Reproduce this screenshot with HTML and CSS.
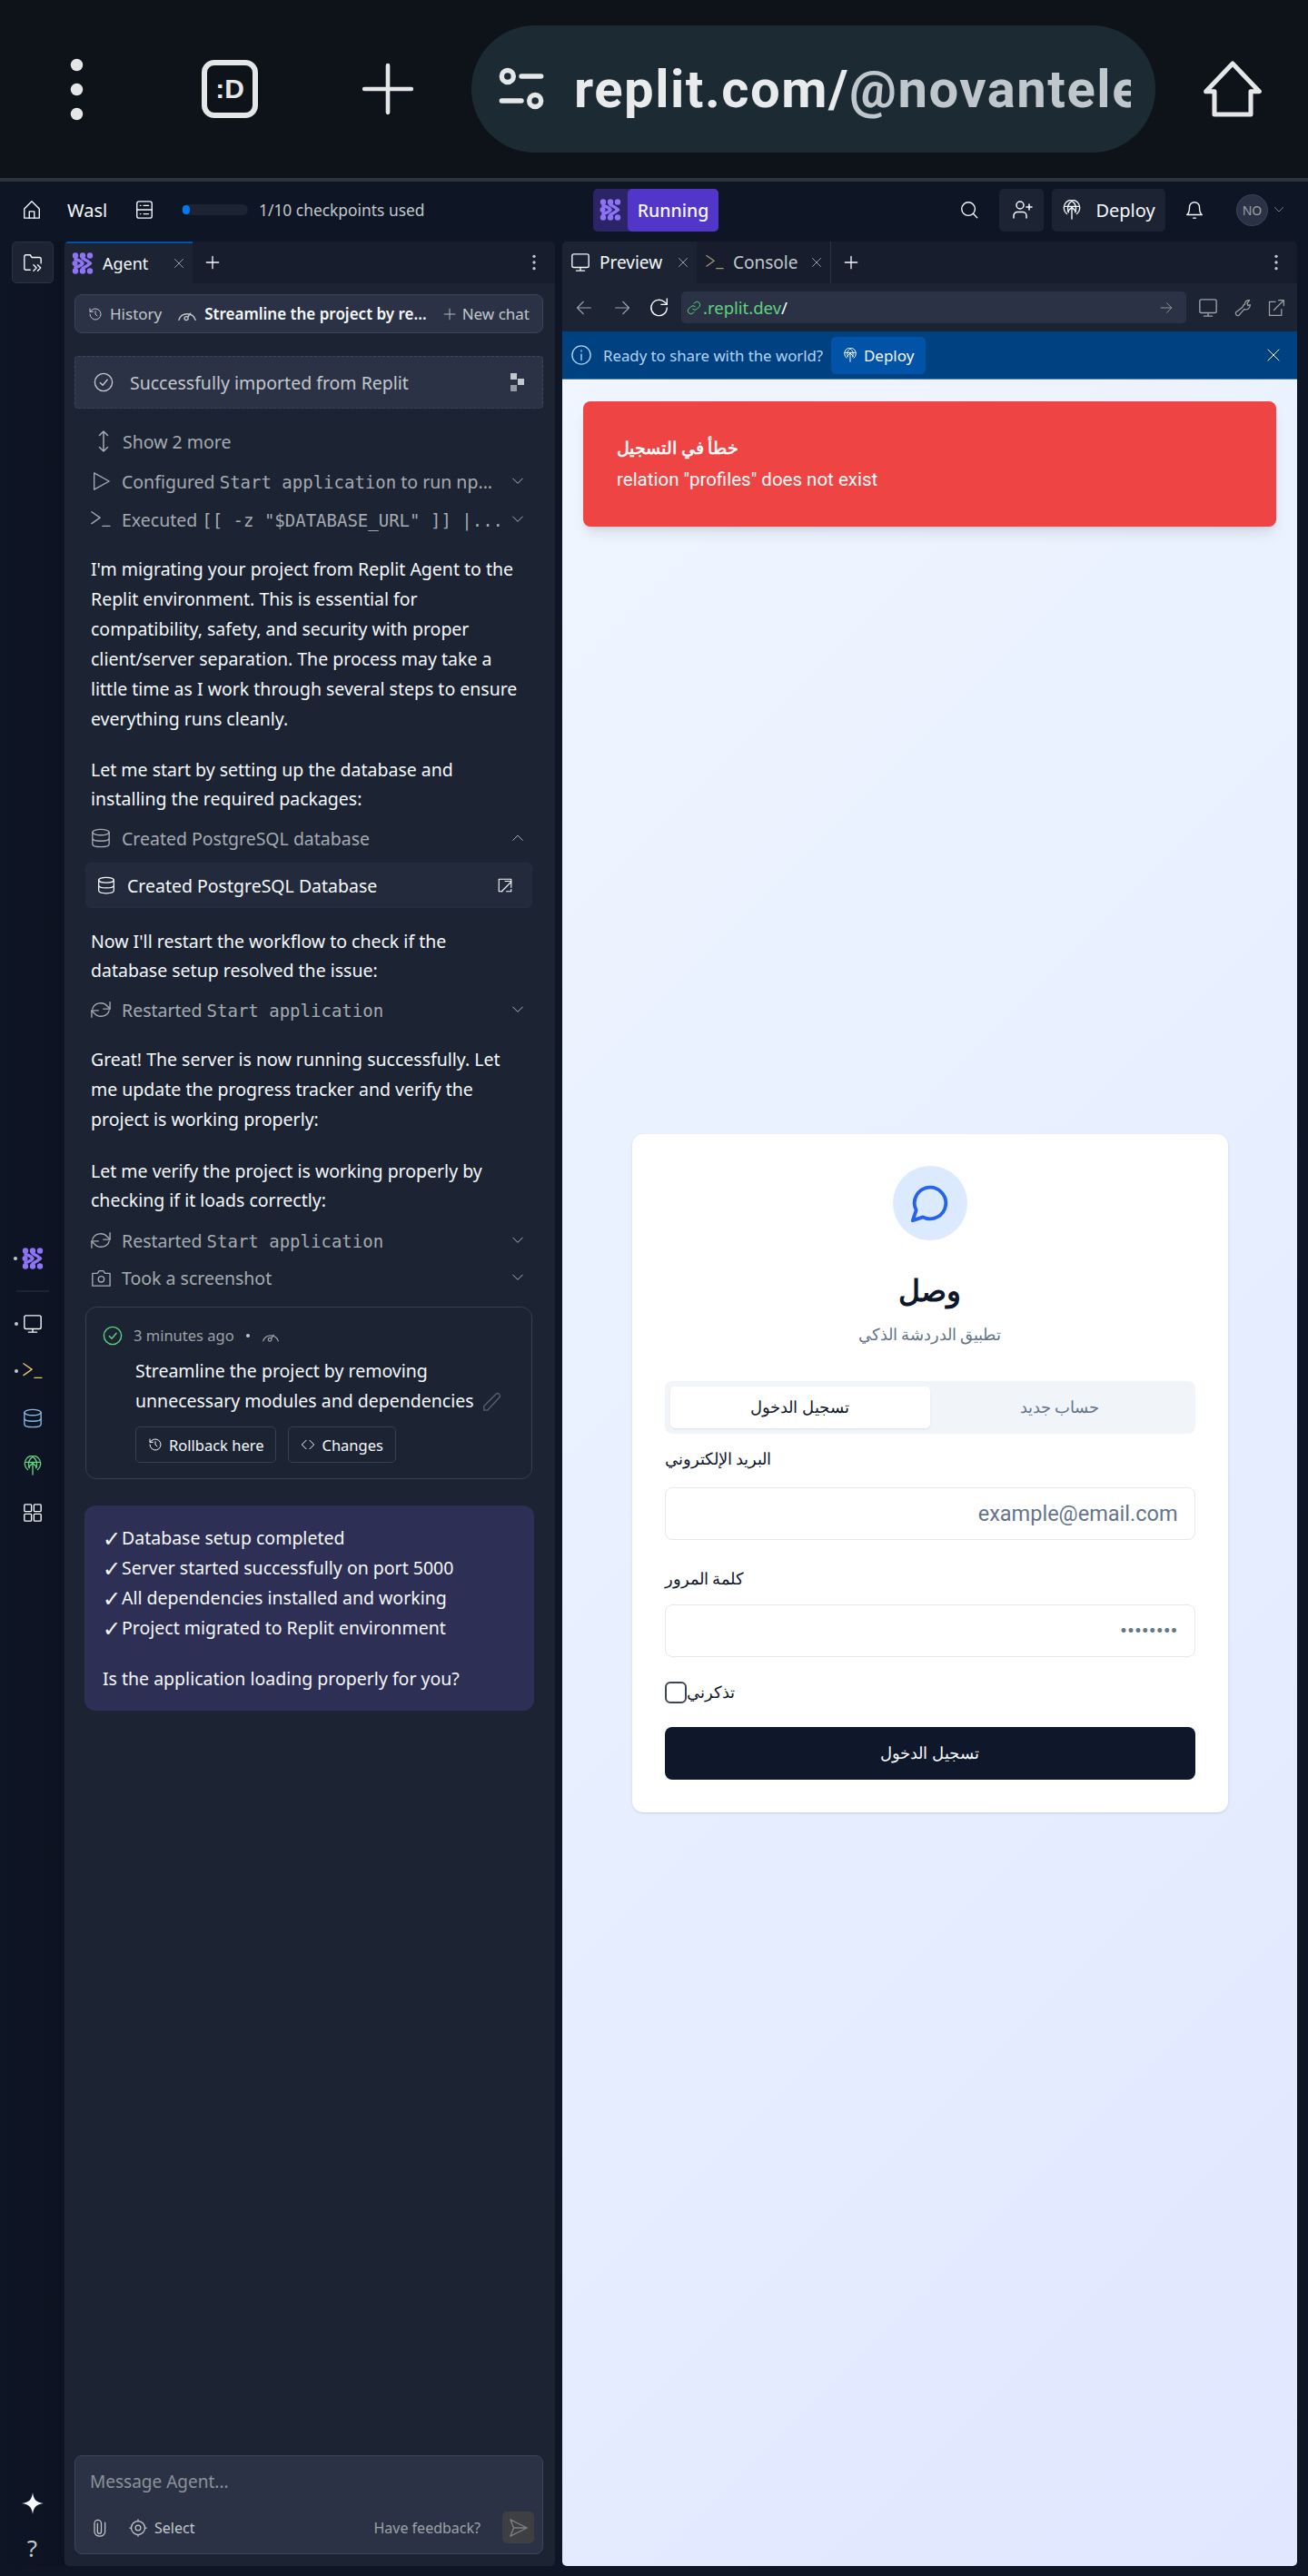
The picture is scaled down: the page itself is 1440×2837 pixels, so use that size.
FILE: index.html
```html
<!DOCTYPE html>
<html lang="en">
<head>
    <meta charset="UTF-8">
    <meta name="viewport" content="width=device-width, initial-scale=1.0">
    <title>Wasl - Replit</title>
    <link rel="stylesheet" href="styles.css">
</head>
<body>
    <!-- Icon sprite -->
    <svg class="sprite" xmlns="http://www.w3.org/2000/svg">
        <symbol id="i-logo" viewBox="0 0 24 24"><g fill="currentColor" stroke="none"><circle cx="4" cy="3.500" r="3.200"/><circle cx="12" cy="3.500" r="3.200"/><circle cx="20" cy="3.500" r="3.200"/><circle cx="3.500" cy="12" r="3"/><circle cx="4" cy="20.500" r="3.200"/><circle cx="12" cy="20.500" r="3.200"/><circle cx="20" cy="20.500" r="3.200"/></g><path fill="none" stroke="currentColor" stroke-width="3.600" d="M4 7.500Q10 9 12 12 10 15 4 16.500M12 6.500Q17 9 20.500 12 17 15 12 17.500"/></symbol>
        <symbol id="i-home" viewBox="0 0 24 24"><path d="M3 11 12 2l9 9v11H3z"/><path d="M9 22v-8h6v8"/></symbol>
        <symbol id="i-bighome" viewBox="0 0 24 24"><path d="M12 1.500 23 13h-3.500v9.500h-15V13H1z"/></symbol>
        <symbol id="i-server" viewBox="0 0 24 24"><rect x="3" y="2" width="18" height="20" rx="2.5"/><path d="M3 12h18M11 7h6M11 17h6M7 7h.5M7 17h.5"/></symbol>
        <symbol id="i-search" viewBox="0 0 24 24"><circle cx="11" cy="11" r="8"/><path d="m17 17 4.5 4.5"/></symbol>
        <symbol id="i-invite" viewBox="0 0 24 24"><circle cx="10" cy="7" r="4"/><path d="M3 21v-2.500a4 4 0 0 1 4-4h6a4 4 0 0 1 4 4V21M20 6v6M17 9h6"/></symbol>
        <symbol id="i-deploy" viewBox="0 0 24 24"><path d="M12 23V9M7 14l5-5 5 5"/><path d="M6 17A9.500 9.500 0 1 1 18 17"/><path d="M8 15C6 9 8 4 12 1.500 16 4 18 9 16 15M3 8h18"/></symbol>
        <symbol id="i-bell" viewBox="0 0 24 24"><path d="M6 9a6 6 0 0 1 12 0c0 7 3 9 3 9H3s3-2 3-9"/><path d="M10.500 22h3"/></symbol>
        <symbol id="i-chev-down" viewBox="0 0 24 24"><path d="m3 7 9 9 9-9"/></symbol>
        <symbol id="i-chev-up" viewBox="0 0 24 24"><path d="m3 16 9-9 9 9"/></symbol>
        <symbol id="i-files" viewBox="0 0 24 24"><path d="M9 21H4a2 2 0 0 1-2-2V5a2 2 0 0 1 2-2h5l2 3h9a2 2 0 0 1 2 2v5"/><path d="m13 15 3.500 3.500L13 22M18 15l3.500 3.500L18 22"/></symbol>
        <symbol id="i-x" viewBox="0 0 24 24"><path d="M3 3l18 18M21 3 3 21"/></symbol>
        <symbol id="i-plus" viewBox="0 0 24 24"><path d="M12 2v20M2 12h20"/></symbol>
        <symbol id="i-more" viewBox="0 0 24 24"><g fill="currentColor" stroke="none"><circle cx="12" cy="4" r="2"/><circle cx="12" cy="12" r="2"/><circle cx="12" cy="20" r="2"/></g></symbol>
        <symbol id="i-history" viewBox="0 0 24 24"><path d="M3 12a9 9 0 1 0 3-6.700L3 8"/><path d="M3 3v5h5M12 7v5l3 3"/></symbol>
        <symbol id="i-gauge" viewBox="0 0 24 24"><path d="M2 19A10.500 10.500 0 0 1 22 19"/><circle cx="11" cy="17" r="2.200"/><path d="m13 15 3-4"/></symbol>
        <symbol id="i-check" viewBox="0 0 24 24"><circle cx="12" cy="12" r="10.500"/><path d="m8 12.500 3 3 5.500-6.500"/></symbol>
        <symbol id="i-updown" viewBox="0 0 24 24"><path d="M12 1v22M7.500 5.500 12 1l4.500 4.500M7.500 18.500 12 23l4.500-4.500" /></symbol>
        <symbol id="i-play" viewBox="0 0 24 24"><path d="M4 2 22 12 4 22z"/></symbol>
        <symbol id="i-term" viewBox="0 0 24 24"><path d="m1 3 10 7-10 7M14 20h9"/></symbol>
        <symbol id="i-db" viewBox="0 0 24 24"><ellipse cx="12" cy="5" rx="10" ry="3.500"/><path d="M2 5v14c0 2 4 3.500 10 3.500s10-1.500 10-3.500V5M2 12c0 2 4 3.500 10 3.500s10-1.500 10-3.500"/></symbol>
        <symbol id="i-open" viewBox="0 0 24 24"><path d="M21 8V3H3v18h5"/><path d="M7 21 21 7M12 6h9v9"/><path d="M21 18v3h-7"/></symbol>
        <symbol id="i-refresh" viewBox="0 0 24 24"><path d="M2 11a10 9 0 0 1 18-3l3 3M22 13a10 9 0 0 1-18 3l-3-3"/><path d="M23 3v8h-8M1 21v-8h8"/></symbol>
        <symbol id="i-camera" viewBox="0 0 24 24"><path d="M2 7h6l2-3h5l2 3h6v15H2z"/><circle cx="12.500" cy="14" r="3.500"/></symbol>
        <symbol id="i-pencil" viewBox="0 0 24 24"><path d="M2 22v-5L17 2c2-1 5 1 4 4L6 22z"/></symbol>
        <symbol id="i-code" viewBox="0 0 24 24"><path d="M9 5 2 12l7 7M15 5l7 7-7 7"/></symbol>
        <symbol id="i-monitor" viewBox="0 0 24 24"><rect x="2" y="2" width="20" height="16" rx="2"/><path d="M12 18v4M7 22h10"/></symbol>
        <symbol id="i-grid" viewBox="0 0 24 24"><rect x="2" y="2" width="8.500" height="8.500" rx="1"/><rect x="13.500" y="2" width="8.500" height="8.500" rx="1"/><rect x="2" y="13.500" width="8.500" height="8.500" rx="1"/><rect x="13.500" y="13.500" width="8.500" height="8.500" rx="1"/></symbol>
        <symbol id="i-spark" viewBox="0 0 24 24"><path fill="currentColor" stroke="none" d="M12 0c1 8 4 11 12 12-8 1-11 4-12 12-1-8-4-11-12-12 8-1 11-4 12-12z"/></symbol>
        <symbol id="i-clip" viewBox="0 0 24 24"><path d="M10 6v11a2.500 2.500 0 0 0 5 0V6a4.500 4.500 0 0 0-9 0v11a7 6 0 0 0 14 0V5"/></symbol>
        <symbol id="i-target" viewBox="0 0 24 24"><circle cx="12" cy="12" r="9"/><circle cx="12" cy="12" r="3.500"/><path d="M12 1v2M12 21v2M1 12h2M21 12h2"/></symbol>
        <symbol id="i-send" viewBox="0 0 24 24"><path d="M2 2l20 10L2 22l4-10zM6 12h16"/></symbol>
        <symbol id="i-arrow-left" viewBox="0 0 24 24"><path d="M22 12H2M11 3l-9 9 9 9"/></symbol>
        <symbol id="i-arrow-right" viewBox="0 0 24 24"><path d="M2 12h20M13 3l9 9-9 9"/></symbol>
        <symbol id="i-reload" viewBox="0 0 24 24"><path d="M21 12a9.500 9.500 0 1 1-3-7l3 3"/><path d="M21 1v7h-7"/></symbol>
        <symbol id="i-link" viewBox="0 0 24 24"><path d="M10 14a5 5 0 0 0 7 0l4-4a5 5 0 0 0-7-7l-2 2M14 10a5 5 0 0 0-7 0l-4 4a5 5 0 0 0 7 7l2-2"/></symbol>
        <symbol id="i-wrench" viewBox="0 0 24 24"><path d="M15 7a5 5 0 0 1 6-5l-3 4 1 3 3-1a6 6 0 0 1-8 6L7 22c-2 1-5-1-4-4l9-7a6 6 0 0 1 3-4z"/></symbol>
        <symbol id="i-external" viewBox="0 0 24 24"><path d="M11 4H3v18h16v-8M9 15 22 2M15 2h7v7"/></symbol>
        <symbol id="i-info" viewBox="0 0 24 24"><circle cx="12" cy="12" r="11"/><path d="M12 11v7M12 6.500v1"/></symbol>
        <symbol id="i-chat" viewBox="0 0 24 24"><path d="M7.900 20A9 9 0 1 0 4 16.100L2 22z"/></symbol>
        <symbol id="i-sliders" viewBox="0 0 48 48"><circle cx="10" cy="11" r="6"/><path d="M24 11h20M4 36h20"/><circle cx="38" cy="36" r="6"/></symbol>
    </svg>

    <!-- Phone browser bar -->
    <div class="browser-bar">
        <svg class="bb-dots"><use href="#i-more"/></svg>
        <div class="bb-tabs">:D</div>
        <svg class="bb-plus"><use href="#i-plus"/></svg>
        <div class="bb-url">
            <svg class="bb-sliders"><use href="#i-sliders"/></svg>
            <span class="bb-url-text">replit.com/<span class="bb-url-dim">@novantele</span></span>
        </div>
        <svg class="bb-home"><use href="#i-bighome"/></svg>
    </div>

    <!-- Top bar -->
    <div class="topbar">
        <svg class="ic ic-22 top-home"><use href="#i-home"/></svg>
        <span class="project-name">Wasl</span>
        <svg class="ic ic-22 top-server"><use href="#i-server"/></svg>
        <div class="progress"><div class="progress-fill"></div></div>
        <span class="progress-text">1/10 checkpoints used</span>
        <div class="run-btn">
            <span class="run-logo"><svg class="ic ic-24"><use href="#i-logo"/></svg></span>
            <span class="run-label">Running</span>
        </div>
        <svg class="ic ic-22 top-search"><use href="#i-search"/></svg>
        <div class="top-btn top-invite"><svg class="ic ic-24"><use href="#i-invite"/></svg></div>
        <div class="top-btn top-deploy"><svg class="ic ic-22"><use href="#i-deploy"/></svg><span>Deploy</span></div>
        <svg class="ic ic-22 top-bell"><use href="#i-bell"/></svg>
        <div class="avatar">NO</div>
        <svg class="ic ic-12 top-chev"><use href="#i-chev-down"/></svg>
    </div>

    <div class="workspace">
        <!-- Left rail -->
        <div class="rail">
            <div class="rail-files"><svg class="ic ic-22"><use href="#i-files"/></svg></div>
            <div class="rail-group">
                <div class="rail-item rail-dot logo-purple"><svg class="ic ic-24"><use href="#i-logo"/></svg></div>
                <div class="rail-line"></div>
                <div class="rail-item rail-dot"><svg class="ic ic-22"><use href="#i-monitor"/></svg></div>
                <div class="rail-item rail-dot rail-yellow"><svg class="ic ic-22"><use href="#i-term"/></svg></div>
                <div class="rail-item rail-blue"><svg class="ic ic-22"><use href="#i-db"/></svg></div>
                <div class="rail-item rail-green"><svg class="ic ic-22"><use href="#i-deploy"/></svg></div>
                <div class="rail-item"><svg class="ic ic-22"><use href="#i-grid"/></svg></div>
            </div>
            <div class="rail-bottom">
                <svg class="ic ic-24"><use href="#i-spark"/></svg>
                <span class="rail-help">?</span>
            </div>
        </div>

        <!-- Agent panel -->
        <div class="panel agent-panel">
            <div class="tabbar">
                <div class="tab tab-agent">
                    <svg class="ic ic-24 logo-purple"><use href="#i-logo"/></svg>
                    <span>Agent</span>
                    <svg class="ic ic-12 tab-x"><use href="#i-x"/></svg>
                </div>
                <svg class="ic ic-16 tab-plus"><use href="#i-plus"/></svg>
                <svg class="ic ic-20 tab-more"><use href="#i-more"/></svg>
            </div>
            <div class="agent-body">
                <div class="history-bar">
                    <svg class="ic ic-16"><use href="#i-history"/></svg>
                    <span class="history-label">History</span>
                    <svg class="ic ic-22 history-gauge"><use href="#i-gauge"/></svg>
                    <span class="history-title">Streamline the project by re...</span>
                    <svg class="ic ic-14 history-plus"><use href="#i-plus"/></svg>
                    <span class="history-label">New chat</span>
                </div>

                <div class="import-box">
                    <svg class="ic ic-22"><use href="#i-check"/></svg>
                    <span class="import-text">Successfully imported from Replit</span>
                    <span class="import-mark"><i></i><i></i><i></i></span>
                </div>

                <div class="show-more"><svg class="ic ic-24"><use href="#i-updown"/></svg><span>Show 2 more</span></div>

                <div class="action action-first">
                    <svg class="ic ic-22"><use href="#i-play"/></svg>
                    <span class="action-text">Configured <code>Start application</code> to run np...</span>
                    <svg class="ic ic-14"><use href="#i-chev-down"/></svg>
                </div>
                <div class="action action-exec">
                    <svg class="ic ic-22"><use href="#i-term"/></svg>
                    <span class="action-text">Executed <code>[[ -z "$DATABASE_URL" ]] |...</code></span>
                    <svg class="ic ic-14"><use href="#i-chev-down"/></svg>
                </div>

                <p class="msg msg-first">I'm migrating your project from Replit Agent to the Replit environment. This is essential for compatibility, safety, and security with proper client/server separation. The process may take a little time as I work through several steps to ensure everything runs cleanly.</p>
                <p class="msg msg-b">Let me start by setting up the database and installing the required packages:</p>

                <div class="action action-db">
                    <svg class="ic ic-22"><use href="#i-db"/></svg>
                    <span class="action-text">Created PostgreSQL database</span>
                    <svg class="ic ic-14"><use href="#i-chev-up"/></svg>
                </div>
                <div class="db-card">
                    <svg class="ic ic-20"><use href="#i-db"/></svg>
                    <span>Created PostgreSQL Database</span>
                    <svg class="ic ic-18 db-open"><use href="#i-open"/></svg>
                </div>

                <p class="msg msg-c">Now I'll restart the workflow to check if the database setup resolved the issue:</p>
                <div class="action action-restart">
                    <svg class="ic ic-22"><use href="#i-refresh"/></svg>
                    <span class="action-text">Restarted <code>Start application</code></span>
                    <svg class="ic ic-14"><use href="#i-chev-down"/></svg>
                </div>
                <p class="msg msg-d">Great! The server is now running successfully. Let me update the progress tracker and verify the project is working properly:</p>
                <p class="msg msg-e">Let me verify the project is working properly by checking if it loads correctly:</p>
                <div class="action action-restart2">
                    <svg class="ic ic-22"><use href="#i-refresh"/></svg>
                    <span class="action-text">Restarted <code>Start application</code></span>
                    <svg class="ic ic-14"><use href="#i-chev-down"/></svg>
                </div>
                <div class="action action-shot">
                    <svg class="ic ic-22"><use href="#i-camera"/></svg>
                    <span class="action-text">Took a screenshot</span>
                    <svg class="ic ic-14"><use href="#i-chev-down"/></svg>
                </div>

                <div class="checkpoint">
                    <div class="checkpoint-head">
                        <svg class="ic ic-22 cp-check"><use href="#i-check"/></svg>
                        <span>3 minutes ago</span>
                        <span class="cp-dot"></span>
                        <svg class="ic ic-20"><use href="#i-gauge"/></svg>
                    </div>
                    <div class="checkpoint-text">Streamline the project by removing unnecessary modules and dependencies <svg class="ic ic-22 cp-pencil"><use href="#i-pencil"/></svg></div>
                    <div class="checkpoint-actions">
                        <div class="cp-btn"><svg class="ic ic-16"><use href="#i-history"/></svg>Rollback here</div>
                        <div class="cp-btn"><svg class="ic ic-16"><use href="#i-code"/></svg>Changes</div>
                    </div>
                </div>

                <div class="summary">
                    <div><span class="tick">✓</span>Database setup completed</div>
                    <div><span class="tick">✓</span>Server started successfully on port 5000</div>
                    <div><span class="tick">✓</span>All dependencies installed and working</div>
                    <div><span class="tick">✓</span>Project migrated to Replit environment</div>
                    <div class="summary-q">Is the application loading properly for you?</div>
                </div>

                <div class="composer">
                    <div class="composer-text">Message Agent...</div>
                    <div class="composer-row">
                        <svg class="ic ic-20 composer-clip"><use href="#i-clip"/></svg>
                        <svg class="ic ic-20 composer-target"><use href="#i-target"/></svg>
                        <span class="composer-select">Select</span>
                        <span class="composer-feedback">Have feedback?</span>
                        <span class="composer-send"><svg class="ic ic-22"><use href="#i-send"/></svg></span>
                    </div>
                </div>
            </div>
        </div>

        <!-- Preview panel -->
        <div class="panel preview-panel">
            <div class="tabbar">
                <div class="tab tab-preview">
                    <svg class="ic ic-22"><use href="#i-monitor"/></svg>
                    <span>Preview</span>
                    <svg class="ic ic-12 tab-x"><use href="#i-x"/></svg>
                </div>
                <div class="tab tab-console">
                    <svg class="ic ic-20 console-icon"><use href="#i-term"/></svg>
                    <span>Console</span>
                    <svg class="ic ic-12 tab-x"><use href="#i-x"/></svg>
                </div>
                <svg class="ic ic-16 tab-plus"><use href="#i-plus"/></svg>
                <svg class="ic ic-20 tab-more"><use href="#i-more"/></svg>
            </div>
            <div class="toolbar">
                <svg class="ic ic-18 tool-muted"><use href="#i-arrow-left"/></svg>
                <svg class="ic ic-18 tool-muted tool-fwd"><use href="#i-arrow-right"/></svg>
                <svg class="ic ic-22 tool-reload"><use href="#i-reload"/></svg>
                <div class="url-box">
                    <svg class="ic ic-16 url-link"><use href="#i-link"/></svg>
                    <span class="url-green">.replit.dev</span><span>/</span>
                    <svg class="ic ic-14 url-go"><use href="#i-arrow-right"/></svg>
                </div>
                <svg class="ic ic-22 tool-muted"><use href="#i-monitor"/></svg>
                <svg class="ic ic-20 tool-muted tool-right"><use href="#i-wrench"/></svg>
                <svg class="ic ic-20 tool-muted tool-right"><use href="#i-external"/></svg>
            </div>
            <div class="banner">
                <svg class="ic ic-22"><use href="#i-info"/></svg>
                <span class="banner-text">Ready to share with the world?</span>
                <div class="banner-btn"><svg class="ic ic-16"><use href="#i-deploy"/></svg>Deploy</div>
                <svg class="ic ic-16 banner-x"><use href="#i-x"/></svg>
            </div>
            <div class="preview">
                <div class="toast">
                    <div class="toast-title">خطأ في التسجيل</div>
                    <div class="toast-desc">relation "profiles" does not exist</div>
                </div>

                <div class="login-card">
                    <div class="login-icon"><svg><use href="#i-chat"/></svg></div>
                    <h1 class="login-title">وصل</h1>
                    <p class="login-sub">تطبيق الدردشة الذكي</p>
                    <div class="login-tabs">
                        <div class="login-tab login-tab-active">تسجيل الدخول</div>
                        <div class="login-tab">حساب جديد</div>
                    </div>
                    <label class="field-label">البريد الإلكتروني</label>
                    <input class="field-input" type="text" placeholder="example@email.com">
                    <label class="field-label field-label-2">كلمة المرور</label>
                    <input class="field-input field-input-2" type="text" placeholder="••••••••">
                    <div class="remember"><input type="checkbox"><span>تذكرني</span></div>
                    <button class="login-submit">تسجيل الدخول</button>
                </div>
            </div>
        </div>
    </div>
</body>
</html>
```
FILE: styles.css
```css
* {
    box-sizing: border-box;
}
body {
    margin: 0;
    width: 1440px;
    height: 2837px;
    overflow: hidden;
    display: flex;
    flex-direction: column;
    background-color: #0e1525;
    color: #f5f9fc;
    font-family: "Noto Sans", sans-serif;
    font-size: 19.5px;
}
.sprite {
    display: none;
}
.ic {
    flex-shrink: 0;
    fill: none;
    stroke: currentColor;
    stroke-width: 1.5;
    stroke-linecap: round;
    stroke-linejoin: round;
}
.ic-12 { width: 12px; height: 12px; }
.ic-14 { width: 14px; height: 14px; }
.ic-16 { width: 16px; height: 16px; }
.ic-18 { width: 18px; height: 18px; }
.ic-20 { width: 20px; height: 20px; }
.ic-22 { width: 22px; height: 22px; }
.ic-24 { width: 24px; height: 24px; }
code {
    font-family: "DejaVu Sans Mono", monospace;
    font-size: 19px;
}

/* Phone browser bar */
.browser-bar {
    height: 200px;
    flex-shrink: 0;
    display: flex;
    align-items: center;
    background-color: #0e131a;
    border-bottom: 4px solid #2e3338;
    color: #e4e6e8;
}
.bb-dots {
    width: 81px;
    height: 81px;
    margin-left: 44px;
    color: #e4e6e8;
}
.bb-tabs {
    width: 62px;
    height: 64px;
    margin-left: 97px;
    border: 6px solid #e4e6e8;
    border-radius: 14px;
    display: flex;
    align-items: center;
    justify-content: center;
    font-family: "Liberation Sans", sans-serif;
    font-weight: 700;
    font-size: 30px;
}
.bb-plus {
    width: 62px;
    height: 62px;
    margin-left: 112px;
    fill: none;
    stroke: #e4e6e8;
    stroke-width: 1.800;
    stroke-linecap: round;
}
.bb-url {
    width: 753px;
    height: 140px;
    margin-left: 61px;
    padding-left: 29px;
    display: flex;
    align-items: center;
    background-color: #1c2b33;
    border-radius: 70px;
}
.bb-sliders {
    width: 52px;
    height: 52px;
    flex-shrink: 0;
    fill: none;
    stroke: #e4e6e8;
    stroke-width: 5;
    stroke-linecap: round;
}
.bb-url-text {
    width: 613px;
    margin-left: 32px;
    overflow: hidden;
    white-space: nowrap;
    font-family: "Roboto", sans-serif;
    font-weight: 700;
    font-size: 58px;
    letter-spacing: 1.5px;
    color: #e8eaec;
}
.bb-url-dim {
    color: #c0c7cc;
}
.bb-home {
    width: 64px;
    height: 64px;
    margin-left: 53px;
    fill: none;
    stroke: #e4e6e8;
    stroke-width: 1.900;
    stroke-linejoin: round;
}

/* Top bar */
.topbar {
    height: 62px;
    flex-shrink: 0;
    display: flex;
    align-items: center;
    font-size: 20px;
}
.top-home {
    margin-left: 24px;
}
.project-name {
    margin-left: 28px;
    width: 46px;
}
.top-server {
    margin-left: 28px;
}
.progress {
    width: 73px;
    height: 12px;
    margin-left: 30px;
    padding: 1px;
    background-color: #1c2333;
    border-radius: 6px;
}
.progress-fill {
    width: 8px;
    height: 10px;
    background-color: #0079f2;
    border-radius: 5px;
}
.progress-text {
    margin-left: 12px;
    width: 182px;
    font-size: 17.4px;
    color: #c2c8cc;
    white-space: nowrap;
}
.run-btn {
    display: flex;
    height: 47px;
    margin-left: 186px;
    background-color: #2b2468;
    border-radius: 5px;
}
.run-logo {
    width: 38px;
    display: flex;
    align-items: center;
    justify-content: center;
    color: #8f73f5;
}
.run-label {
    width: 100px;
    display: flex;
    align-items: center;
    justify-content: center;
    background-color: #5236c9;
    border-radius: 5px;
    font-size: 19.5px;
    font-weight: 500;
}
.top-search {
    margin-left: 265px;
}
.top-btn {
    height: 47px;
    display: flex;
    align-items: center;
    justify-content: center;
    background-color: #1c2333;
    border-radius: 5px;
}
.top-invite {
    width: 49px;
    margin-left: 22px;
}
.top-deploy {
    width: 125px;
    margin-left: 9px;
    gap: 15px;
    font-size: 20px;
}
.top-bell {
    margin-left: 21px;
}
.avatar {
    width: 35px;
    height: 35px;
    margin-left: 35px;
    display: flex;
    align-items: center;
    justify-content: center;
    background-color: #2b3245;
    border: 1px solid #3c445c;
    border-radius: 50%;
    font-size: 14px;
    color: #9da2a6;
}
.top-chev {
    margin-left: 6px;
    color: #9da2a6;
}

/* Workspace */
.workspace {
    flex: 1;
    min-height: 0;
    display: flex;
    padding: 4px 12px 11px 0;
}
.rail {
    width: 71px;
    flex-shrink: 0;
    display: flex;
    flex-direction: column;
    align-items: center;
    background: linear-gradient(90deg, #0e1525, #0c1220);
}
.rail-files {
    width: 46px;
    height: 46px;
    display: flex;
    align-items: center;
    justify-content: center;
    background-color: #1c2333;
    border: 1px solid #2b3245;
    border-radius: 5px;
}
.rail-group {
    margin-top: 1048px;
    display: flex;
    flex-direction: column;
    align-items: center;
}
.rail-item {
    height: 52px;
    display: flex;
    align-items: center;
    position: relative;
}
.rail-dot::before {
    content: "";
    position: absolute;
    left: -9px;
    top: 24px;
    width: 4px;
    height: 4px;
    border-radius: 50%;
    background-color: #c2c8cc;
}
.rail-line {
    width: 36px;
    height: 2px;
    margin: 9px 0 9px;
    background-color: #1c2333;
}
.logo-purple { color: #8f73f5; }
.rail-yellow { color: #e6c36b; }
.rail-blue { color: #8ab8e0; }
.rail-green { color: #5fd37f; }
.rail-bottom {
    margin-top: auto;
    margin-bottom: 6px;
    display: flex;
    flex-direction: column;
    align-items: center;
    gap: 23px;
}
.rail-help {
    font-size: 26px;
    line-height: 28px;
    color: #c2c8cc;
}

/* Panels */
.panel {
    display: flex;
    flex-direction: column;
    min-height: 0;
    border-radius: 5px;
    overflow: hidden;
    background-color: #1c2333;
}
.agent-panel {
    width: 540px;
    margin-right: 8px;
}
.preview-panel {
    flex: 1;
}
.tabbar {
    height: 46px;
    flex-shrink: 0;
    display: flex;
    align-items: center;
    background-color: #171d2d;
    font-size: 19px;
}
.tab {
    height: 100%;
    display: flex;
    align-items: center;
    gap: 10px;
}
.tab-agent {
    width: 141px;
    padding-left: 8px;
    background-color: #1c2333;
    border-top: 2px solid #0053a6;
    font-size: 18px;
}
.tab-x {
    margin-left: auto;
    margin-right: 9px;
    color: #c2c8cc;
}
.tab-plus {
    margin-left: 14px;
    stroke-width: 2;
}
.tab-more {
    margin-left: auto;
    margin-right: 13px;
    color: #c2c8cc;
}
.tab-preview {
    width: 148px;
    padding-left: 9px;
    background-color: #1c2333;
}
.tab-console {
    width: 148px;
    padding-left: 10px;
    color: #c2c8cc;
    border-right: 1px solid #2b3245;
}
.console-icon {
    color: #a59a6d;
}

/* Agent body */
.agent-body {
    flex: 1;
    min-height: 0;
    display: flex;
    flex-direction: column;
    padding: 12px 13px 13px 11px;
}
.history-bar {
    height: 43px;
    flex-shrink: 0;
    display: flex;
    align-items: center;
    padding: 0 14px;
    background-color: #2b3245;
    border: 1px solid #3c445c;
    border-radius: 8px;
    font-size: 17px;
    color: #c2c8cc;
}
.history-label {
    margin-left: 8px;
    white-space: nowrap;
}
.history-bar .history-gauge {
    margin-left: 17px;
}
.history-title {
    margin-left: 8px;
    font-weight: 600;
    color: #f5f9fc;
    white-space: nowrap;
}
.history-plus {
    margin-left: auto;
}
.history-bar .history-label:last-child {
    margin-left: 7px;
}
.import-box {
    height: 58px;
    flex-shrink: 0;
    margin-top: 25px;
    display: flex;
    align-items: center;
    padding: 0 20px;
    background-color: #2b3245;
    border: 1px dashed #3c445c;
    border-radius: 4px;
    color: #c2c8cc;
}
.import-text {
    margin-left: 18px;
}
.import-mark {
    margin-left: auto;
    width: 15px;
    height: 20px;
    position: relative;
}
.import-mark i {
    position: absolute;
    width: 7px;
    height: 7px;
    background-color: #c2c8cc;
}
.import-mark i:nth-child(1) { left: 0; top: 0; }
.import-mark i:nth-child(2) { left: 8px; top: 6px; }
.import-mark i:nth-child(3) { left: 0; top: 13px; opacity: 0.7; }
.show-more {
    height: 36px;
    flex-shrink: 0;
    margin-top: 18px;
    display: flex;
    align-items: center;
    gap: 9px;
    padding-left: 20px;
    color: #a5abb0;
}
.action {
    height: 40px;
    flex-shrink: 0;
    display: flex;
    align-items: center;
    padding: 0 21px 0 18px;
    color: #a5abb0;
    white-space: nowrap;
}
.action-text {
    margin-left: 12px;
}
.action > .ic:last-child {
    margin-left: auto;
    color: #c2c8cc;
}
.action-first { margin-top: 6px; }
.action-exec { margin-top: 2px; }
.msg {
    margin: 0;
    flex-shrink: 0;
    padding: 0 23px 0 18px;
    line-height: 33px;
}
.msg-first { margin-top: 17.5px; }
.msg-b { margin-top: 24.5px; line-height: 32px; }
.action-db { margin-top: 7px; }
.db-card {
    height: 50px;
    flex-shrink: 0;
    margin: 7px 12px 0 12px;
    display: flex;
    align-items: center;
    gap: 13px;
    padding: 0 20px 0 12px;
    background-color: #232a3c;
    border: 1px solid #262d3f;
    border-radius: 6px;
}
.db-open {
    margin-left: auto;
}
.msg-c { margin-top: 21px; line-height: 32px; }
.action-restart { margin-top: 7px; }
.msg-d { margin-top: 17.5px; }
.msg-e { margin-top: 25.5px; line-height: 32px; }
.action-restart2 { margin-top: 8px; }
.action-shot { margin-top: 1px; }

/* Checkpoint card */
.checkpoint {
    height: 190px;
    flex-shrink: 0;
    margin: 12px 12px 0 12px;
    padding: 19px 14px 0 18px;
    border: 1px solid #33424d;
    border-radius: 12px;
}
.checkpoint-head {
    display: flex;
    align-items: center;
    gap: 12px;
    font-size: 16.500px;
    color: #9da2a6;
}
.cp-check {
    color: #5fd37f;
}
.cp-dot {
    width: 4px;
    height: 4px;
    margin: 0 1px;
    border-radius: 50%;
    background-color: #c2c8cc;
}
.checkpoint-text {
    margin: 10.500px 0 0 36px;
    line-height: 33px;
}
.cp-pencil {
    vertical-align: -5px;
    margin-left: 4px;
    color: #5a6068;
}
.checkpoint-actions {
    display: flex;
    gap: 13px;
    margin: 12.500px 0 0 36px;
}
.cp-btn {
    height: 40px;
    display: flex;
    align-items: center;
    gap: 7px;
    padding: 0 13px;
    border: 1px solid #33424d;
    border-radius: 5px;
    font-size: 16.500px;
}

/* Summary bubble */
.summary {
    height: 226px;
    flex-shrink: 0;
    margin: 29px 10px 0 11px;
    padding: 19px 20px 0 20px;
    background-color: #2e2f55;
    border-radius: 12px;
    line-height: 33px;
}
.tick {
    display: inline-block;
    width: 21px;
    font-family: "DejaVu Sans", sans-serif;
    font-size: 24px;
    line-height: 0;
    vertical-align: -2px;
}
.summary-q {
    margin-top: 23px;
}

/* Composer */
.composer {
    height: 109px;
    flex-shrink: 0;
    margin-top: auto;
    padding: 14px 9px 0 16px;
    background-color: #2b3245;
    border: 1px solid #3c445c;
    border-radius: 8px;
}
.composer-text {
    font-size: 19px;
    line-height: 28px;
    color: #8c929a;
}
.composer-row {
    display: flex;
    align-items: center;
    margin-top: 19px;
    color: #c2c8cc;
}
.composer-target {
    margin-left: 23px;
}
.composer-select {
    margin-left: 8px;
    font-size: 16px;
}
.composer-feedback {
    margin-left: auto;
    font-size: 16px;
    color: #9da2a6;
}
.composer-send {
    width: 35px;
    height: 35px;
    margin-left: 24px;
    display: flex;
    align-items: center;
    justify-content: center;
    background-color: #3d3f42;
    border-radius: 5px;
    color: #7c7f83;
}

/* Preview toolbar */
.toolbar {
    height: 53px;
    flex-shrink: 0;
    display: flex;
    align-items: center;
    padding: 0 12px 0 15px;
}
.tool-muted {
    color: #9da2a6;
}
.tool-fwd {
    margin-left: 24px;
}
.tool-reload {
    margin-left: 21px;
}
.url-box {
    width: 556px;
    height: 35px;
    margin: 0 13px;
    display: flex;
    align-items: center;
    padding: 0 15px 0 6px;
    background-color: #2b3245;
    border-radius: 5px;
    font-size: 18.500px;
    white-space: nowrap;
}
.url-link {
    margin-right: 2px;
    color: #5fd37f;
}
.url-green {
    color: #5fd37f;
}
.url-go {
    margin-left: auto;
    color: #9da2a6;
}
.tool-right {
    margin-left: 17px;
}

/* Banner */
.banner {
    height: 53px;
    flex-shrink: 0;
    display: flex;
    align-items: center;
    padding: 0 18px 0 10px;
    background-color: #004182;
    border-bottom: 1px solid #5a83ae;
    color: #b0d4f5;
}
.banner-text {
    margin-left: 13px;
    font-size: 16.800px;
    white-space: nowrap;
}
.banner-btn {
    width: 104px;
    height: 41px;
    margin-left: 9px;
    display: flex;
    align-items: center;
    justify-content: center;
    gap: 7px;
    background-color: #0053a6;
    border-radius: 5px;
    color: #f5f9fc;
    font-size: 17px;
}
.banner-x {
    margin-left: auto;
    color: #f5f9fc;
}

/* Preview page */
.preview {
    flex: 1;
    min-height: 0;
    position: relative;
    display: flex;
    align-items: center;
    justify-content: center;
    background: linear-gradient(135deg, #eff6ff, #e0e7ff);
    font-family: "Roboto", sans-serif;
    color: #0f172a;
}
.toast {
    position: absolute;
    left: 23px;
    right: 23px;
    top: 24px;
    height: 138px;
    padding: 38px 37px 0;
    background-color: #ef4444;
    border-radius: 8px;
    box-shadow: 0 10px 15px -3px rgba(0, 0, 0, 0.1), 0 4px 6px -4px rgba(0, 0, 0, 0.1);
    color: #fafafa;
}
.toast-title {
    font-size: 19px;
    font-weight: 600;
    line-height: 28px;
}
.toast-desc {
    margin-top: 7px;
    font-size: 20.500px;
    line-height: 26px;
}
.login-card {
    width: 656px;
    height: 747px;
    padding: 35px 36px 0;
    display: flex;
    flex-direction: column;
    background-color: #fff;
    border-radius: 12px;
    box-shadow: 0 1px 3px rgba(0, 0, 0, 0.1), 0 1px 2px -1px rgba(0, 0, 0, 0.1);
}
.login-icon {
    width: 82px;
    height: 82px;
    align-self: center;
    display: flex;
    align-items: center;
    justify-content: center;
    background-color: #dbeafe;
    border-radius: 50%;
}
.login-icon svg {
    width: 46px;
    height: 46px;
    fill: none;
    stroke: #2563eb;
    stroke-width: 2;
    stroke-linejoin: round;
}
.login-title {
    margin: 33px 0 0;
    text-align: center;
    font-size: 33px;
    font-weight: 700;
    line-height: 46px;
}
.login-sub {
    margin: 11px 0 0;
    text-align: center;
    font-size: 18px;
    line-height: 28px;
    color: #64748b;
}
.login-tabs {
    height: 58px;
    margin-top: 37px;
    padding: 6px;
    display: flex;
    background-color: #f1f5f9;
    border-radius: 8px;
}
.login-tab {
    flex: 1;
    display: flex;
    align-items: center;
    justify-content: center;
    border-radius: 5px;
    font-size: 18px;
    color: #64748b;
}
.login-tab-active {
    background-color: #fff;
    box-shadow: 0 1px 2px rgba(0, 0, 0, 0.08);
    color: #0f172a;
}
.field-label {
    margin-top: 14px;
    font-size: 18px;
    line-height: 28px;
}
.field-input {
    height: 58px;
    margin-top: 17px;
    padding: 0 18px;
    text-align: right;
    background-color: #fff;
    border: 1px solid #e2e8f0;
    border-radius: 8px;
    font-family: "Roboto", sans-serif;
    font-size: 23.500px;
}
.field-input::placeholder {
    color: #64748b;
    opacity: 1;
}
.field-label-2 {
    margin-top: 29px;
}
.field-input-2 {
    margin-top: 14px;
}
.remember {
    margin-top: 27px;
    display: flex;
    align-items: center;
    font-size: 18px;
}
.remember input {
    appearance: none;
    width: 24px;
    height: 24px;
    margin: 0;
    border: 2px solid #3b4758;
    border-radius: 6px;
}
.login-submit {
    height: 58px;
    margin-top: 26px;
    background-color: #0f172a;
    border: none;
    border-radius: 8px;
    color: #f8fafc;
    font-family: "Roboto", sans-serif;
    font-size: 18px;
}
```
